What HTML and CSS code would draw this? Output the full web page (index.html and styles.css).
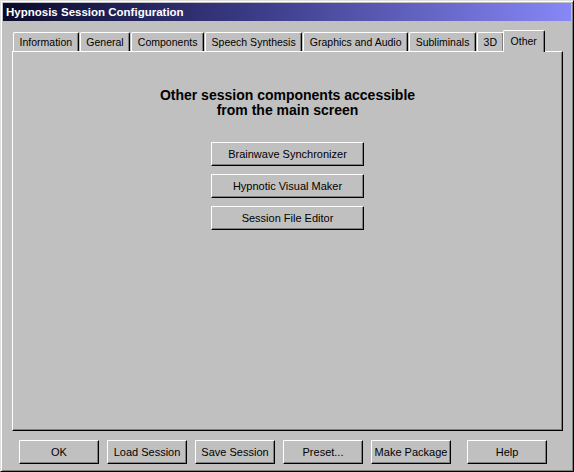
FILE: index.html
```html
<!DOCTYPE html>
<html lang="en">
<head>
  <meta charset="UTF-8">
  <title>Hypnosis Session Configuration</title>
  <link rel="stylesheet" href="styles.css">
</head>
<body>
  <div class="window">
    <div class="titlebar">Hypnosis Session Configuration</div>

    <div class="tabs">
      <div class="tab">Information</div>
      <div class="tab">General</div>
      <div class="tab">Components</div>
      <div class="tab">Speech Synthesis</div>
      <div class="tab">Graphics and Audio</div>
      <div class="tab">Subliminals</div>
      <div class="tab">3D</div>
      <div class="tab active">Other</div>
    </div>

    <div class="panel">
      <h2>Other session components accessible<br>from the main screen</h2>
      <div class="tools">
        <button class="btn wide">Brainwave Synchronizer</button>
        <button class="btn wide">Hypnotic Visual Maker</button>
        <button class="btn wide">Session File Editor</button>
      </div>
    </div>

    <div class="actions">
      <button class="btn">OK</button>
      <button class="btn">Load Session</button>
      <button class="btn">Save Session</button>
      <button class="btn">Preset...</button>
      <button class="btn">Make Package</button>
      <button class="btn help">Help</button>
    </div>
  </div>
</body>
</html>
```

FILE: styles.css
```css
body {
  margin: 0;
  font-family: 'Liberation Sans', Arial, sans-serif;
  background: #c0c0c0;
  color: #000;
}

.window {
  width: 574px;
  height: 472px;
  box-sizing: border-box;
  background: #c0c0c0;
  border: 1px solid;
  border-color: #dfdfdf #000 #000 #dfdfdf;
  box-shadow: inset 1px 1px #fff, inset -1px -1px #808080;
  padding: 2px;
  display: flex;
  flex-direction: column;
}

.titlebar {
  height: 18px;
  line-height: 18px;
  padding-left: 3px;
  background: linear-gradient(to right, #0a0a2c, #3c3c88 45%, #8787f7);
  color: #fff;
  font-weight: bold;
  font-size: 11.5px;
}

.tabs {
  display: flex;
  align-items: flex-end;
  height: 21px;
  margin-top: 9px;
  padding-left: 10px;
  position: relative;
  z-index: 1;
}

.tab {
  flex-shrink: 0;
  white-space: nowrap;
  height: 18px;
  line-height: 19px;
  padding: 0 5.6px;
  font-size: 10.5px;
  border-top: 1px solid #fff;
  border-left: 1px solid #fff;
  border-right: 1px solid #000;
  border-radius: 2px 2px 0 0;
  box-shadow: inset -1px 0 #808080;
  margin-right: 1px;
}

.tab.active {
  height: 21px;
  line-height: 20px;
  padding: 0 7px;
  margin-left: -2px;
  background: #c0c0c0;
  margin-bottom: -1px;
}

.panel {
  height: 380px;
  box-sizing: border-box;
  margin: 0 8px 0 9px;
  border: 1px solid;
  border-color: #fff #000 #000 #fff;
  box-shadow: inset -1px -1px #808080;
  padding-top: 36px;
  display: flex;
  flex-direction: column;
  align-items: center;
}

h2 {
  margin: 0;
  font-size: 14px;
  line-height: 15px;
  font-weight: bold;
  text-align: center;
}

.tools {
  margin-top: 24px;
  display: flex;
  flex-direction: column;
  gap: 8px;
}

.btn {
  width: 80px;
  height: 24px;
  padding: 0;
  font-family: 'Liberation Sans', Arial, sans-serif;
  font-size: 11px;
  color: #000;
  background: #c0c0c0;
  border: 1px solid;
  border-color: #fff #000 #000 #fff;
  box-shadow: inset -1px -1px #808080;
  border-radius: 0;
}

.btn.wide {
  width: 153px;
}

.actions {
  display: flex;
  gap: 8px;
  margin-top: 9px;
  padding-left: 16px;
}

.btn.help {
  margin-left: 8px;
}
```
